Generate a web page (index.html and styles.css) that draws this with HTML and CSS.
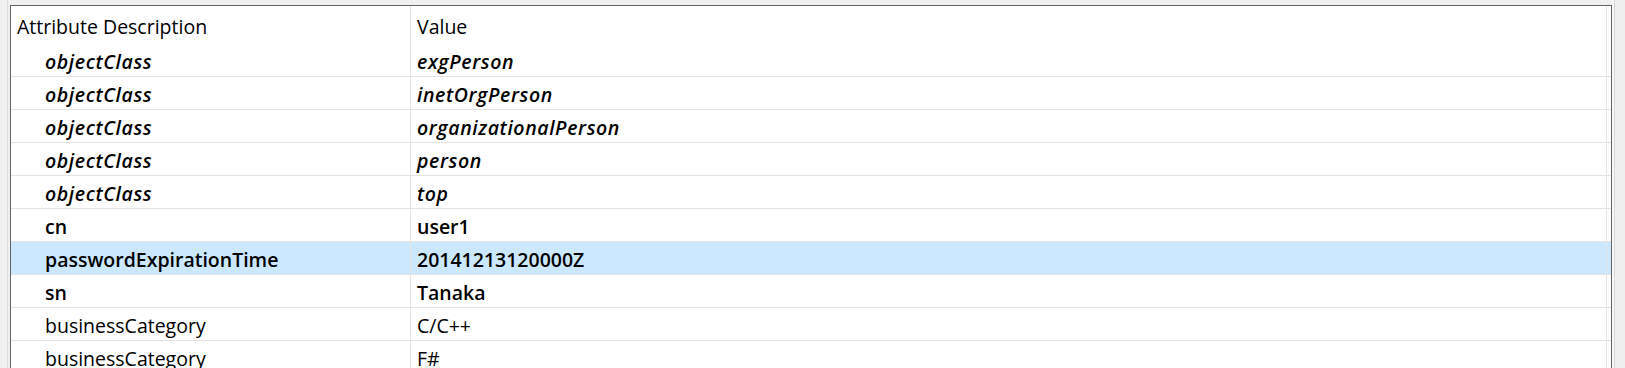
FILE: index.html
```html
<!DOCTYPE html>
<html>
<head>
<meta charset="utf-8">
<link rel="stylesheet" href="styles.css">
</head>
<body>
<div class="window">
  <div class="edge-left"></div>
  <div class="panel">
    <div class="row header">
      <div class="cell c1 head">Attribute Description</div>
      <div class="cell c2 head">Value</div>
      <div class="cell c3"></div>
    </div>
    <div class="row oc">
      <div class="cell c1 child">objectClass</div>
      <div class="cell c2">exgPerson</div>
      <div class="cell c3"></div>
    </div>
    <div class="row oc">
      <div class="cell c1 child">objectClass</div>
      <div class="cell c2">inetOrgPerson</div>
      <div class="cell c3"></div>
    </div>
    <div class="row oc">
      <div class="cell c1 child">objectClass</div>
      <div class="cell c2">organizationalPerson</div>
      <div class="cell c3"></div>
    </div>
    <div class="row oc">
      <div class="cell c1 child">objectClass</div>
      <div class="cell c2">person</div>
      <div class="cell c3"></div>
    </div>
    <div class="row oc">
      <div class="cell c1 child">objectClass</div>
      <div class="cell c2">top</div>
      <div class="cell c3"></div>
    </div>
    <div class="row must">
      <div class="cell c1 child">cn</div>
      <div class="cell c2">user1</div>
      <div class="cell c3"></div>
    </div>
    <div class="row must selected">
      <div class="cell c1 child">passwordExpirationTime</div>
      <div class="cell c2">20141213120000Z</div>
      <div class="cell c3"></div>
    </div>
    <div class="row must">
      <div class="cell c1 child">sn</div>
      <div class="cell c2">Tanaka</div>
      <div class="cell c3"></div>
    </div>
    <div class="row">
      <div class="cell c1 child">businessCategory</div>
      <div class="cell c2">C/C++</div>
      <div class="cell c3"></div>
    </div>
    <div class="row">
      <div class="cell c1 child">businessCategory</div>
      <div class="cell c2">F#</div>
      <div class="cell c3"></div>
    </div>
  </div>
  <div class="edge-right"></div>
</div>
</body>
</html>
```
FILE: styles.css
```css
html, body {
  margin: 0;
  padding: 0;
  background: #f0f0f0;
  overflow: hidden;
  height: 368px;
}

body {
  font-family: "Open Sans", "Noto Sans", sans-serif;
  font-size: 19.5px;
  color: #000;
}

.window {
  display: flex;
  height: 368px;
}

.edge-left {
  width: 7px;
  border-right: 1px solid #dcdcdc;
  margin-right: 2px;
  flex: none;
}

.panel {
  width: 1600px;
  flex: none;
  margin-top: 5px;
  background: #fff;
  border-top: 1px solid #646464;
  border-left: 1px solid #646464;
  border-right: 1px solid #646464;
}

.edge-right {
  flex: none;
  width: 10px;
  border-left: 2px solid #f8f8f8;
  box-shadow: inset 1px 0 0 #d8d8d8;
  background: #f0f0f0;
}

.row {
  display: grid;
  grid-template-columns: 400px 1196px 4px;
  height: 33px;
  box-sizing: border-box;
  border-bottom: 1px solid #e3e3e3;
}

.row.header {
  height: 38px;
  border-bottom: none;
}

.cell {
  display: flex;
  align-items: center;
  padding-top: 3px;
  line-height: 26px;
  white-space: nowrap;
  box-sizing: border-box;
}

.c1, .c2 {
  border-right: 1px solid #e3e3e3;
}

.c1 {
  padding-left: 34px;
}

.c2 {
  padding-left: 6px;
}

.head {
  align-items: flex-start;
  padding-top: 8px;
}

.c1.head {
  padding-left: 6px;
}

.row.oc .cell {
  font-style: italic;
  font-weight: 600;
  letter-spacing: 0.6px;
}

.row.must .cell {
  font-weight: 600;
}

.row.selected {
  background: #cce8ff;
}
```
